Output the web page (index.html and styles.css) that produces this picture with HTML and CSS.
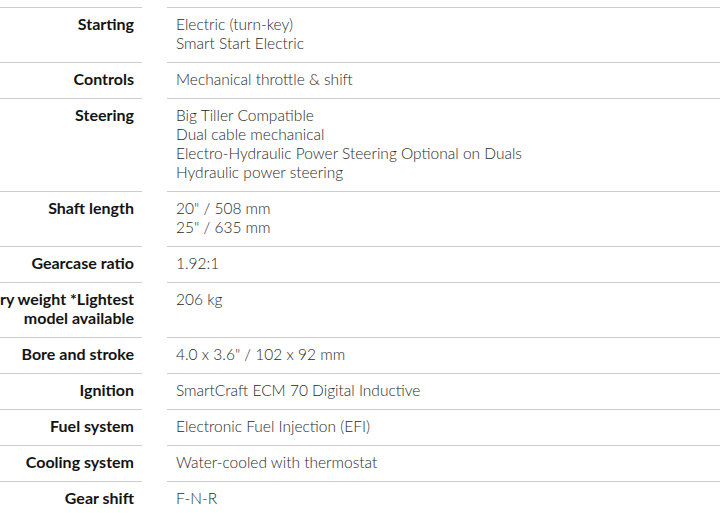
FILE: index.html
```html
<!DOCTYPE html>
<html>
<head>
<meta charset="utf-8">
<link rel="stylesheet" href="styles.css">
</head>
<body>
<div class="specs">
  <div class="row"><div class="label">Starting</div><div class="value">Electric (turn-key)<br>Smart Start Electric</div></div>
  <div class="row"><div class="label">Controls</div><div class="value">Mechanical throttle &amp; shift</div></div>
  <div class="row"><div class="label">Steering</div><div class="value">Big Tiller Compatible<br>Dual cable mechanical<br>Electro-Hydraulic Power Steering Optional on Duals<br>Hydraulic power steering</div></div>
  <div class="row"><div class="label">Shaft length</div><div class="value">20" / 508 mm<br>25" / 635 mm</div></div>
  <div class="row"><div class="label">Gearcase ratio</div><div class="value">1.92:1</div></div>
  <div class="row"><div class="label">Dry weight *Lightest model available</div><div class="value">206 kg</div></div>
  <div class="row"><div class="label">Bore and stroke</div><div class="value">4.0 x 3.6" / 102 x 92 mm</div></div>
  <div class="row"><div class="label">Ignition</div><div class="value">SmartCraft ECM 70 Digital Inductive</div></div>
  <div class="row"><div class="label">Fuel system</div><div class="value">Electronic Fuel Injection (EFI)</div></div>
  <div class="row"><div class="label">Cooling system</div><div class="value">Water-cooled with thermostat</div></div>
  <div class="row"><div class="label">Gear shift</div><div class="value">F-N-R</div></div>
</div>
</body>
</html>
```

FILE: styles.css
```css
html, body {
  margin: 0;
  padding: 0;
  background: #ffffff;
  overflow: hidden;
}
body {
  padding-top: 7px;
  font-family: Lato, "Open Sans", sans-serif;
  font-size: 15px;
  line-height: 19px;
}
.specs {
  margin-left: -34px;
  width: 754px;
}
.row {
  display: grid;
  grid-template-columns: 176px 1fr;
  column-gap: 25px;
}
.label, .value {
  border-top: 1px solid #cccccc;
  padding: 7px 8px 9px 9px;
}
.label {
  padding-top: 6px;
  padding-bottom: 10px;
  text-align: right;
  font-size: 16px;
  font-weight: 700;
  color: #141414;
}
.value {
  font-size: 15.5px;
  font-weight: 300;
  color: #2a2a2a;
}
```
